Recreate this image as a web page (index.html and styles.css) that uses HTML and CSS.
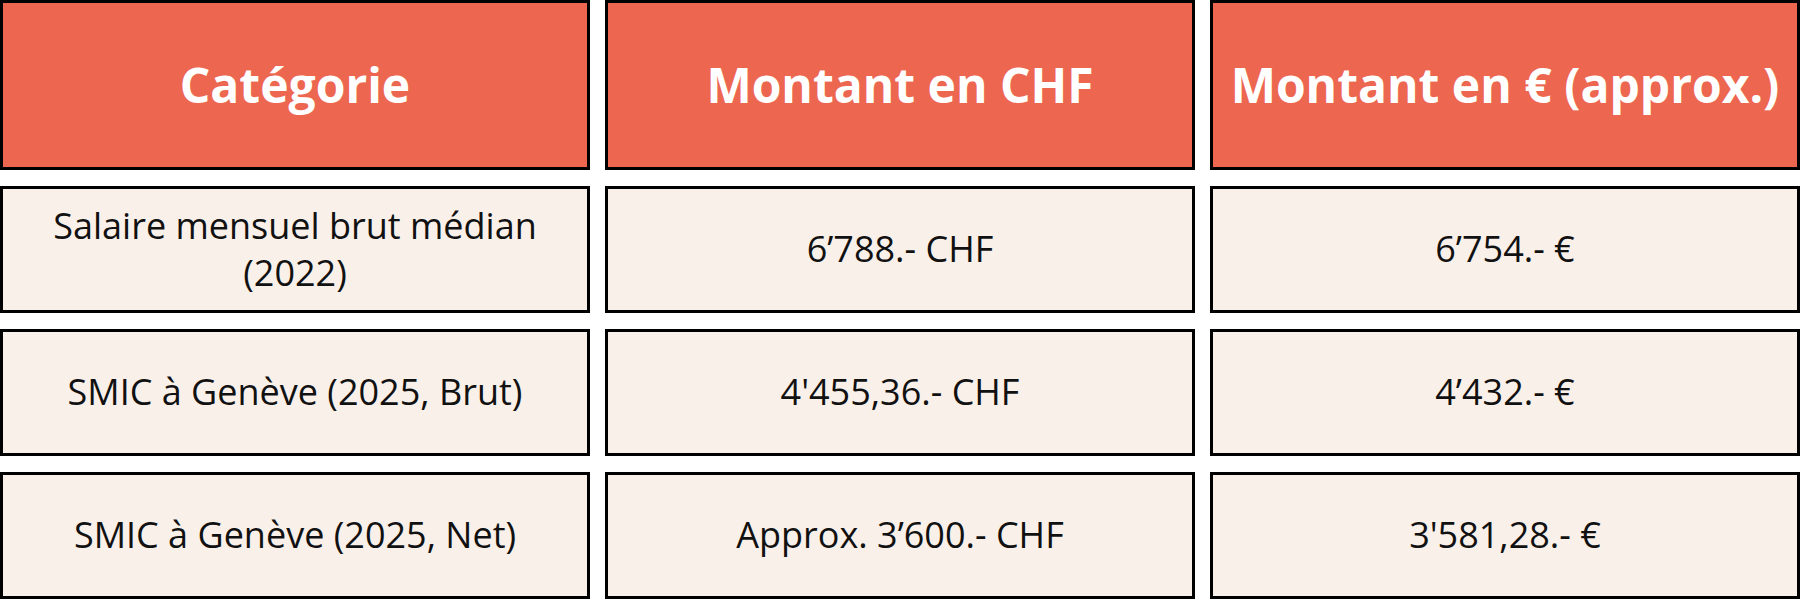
FILE: index.html
```html
<!DOCTYPE html>
<html lang="fr">
<head>
<meta charset="utf-8">
<title>Salaires Genève</title>
<link rel="stylesheet" href="styles.css">
</head>
<body>
<div class="table">
  <div class="cell head">Catégorie</div>
  <div class="cell head">Montant en CHF</div>
  <div class="cell head">Montant en € (approx.)</div>

  <div class="cell">Salaire mensuel brut médian (2022)</div>
  <div class="cell">6’788.- CHF</div>
  <div class="cell">6’754.- €</div>

  <div class="cell">SMIC à Genève (2025, Brut)</div>
  <div class="cell">4'455,36.- CHF</div>
  <div class="cell">4’432.- €</div>

  <div class="cell">SMIC à Genève (2025, Net)</div>
  <div class="cell">Approx. 3’600.- CHF</div>
  <div class="cell">3'581,28.- €</div>
</div>
</body>
</html>
```
FILE: styles.css
```css
html, body {
  margin: 0;
  padding: 0;
  background: #ffffff;
}
body {
  font-family: "Open Sans", "Noto Sans", sans-serif;
  width: 1800px;
  height: 600px;
  overflow: hidden;
}
.table {
  display: grid;
  grid-template-columns: repeat(3, 1fr);
  grid-template-rows: 170px 127px 127px 127px;
  column-gap: 15px;
  row-gap: 16px;
}
.cell {
  box-sizing: border-box;
  border: 3px solid #000;
  background: #faf0ea;
  color: #111;
  display: flex;
  align-items: center;
  justify-content: center;
  text-align: center;
  padding: 0 40px;
  font-size: 36px;
  line-height: 1.3;
}
.head {
  background: #ed6650;
  color: #fff;
  font-weight: 700;
  font-size: 48px;
  padding: 0 6px;
  white-space: nowrap;
}
```
